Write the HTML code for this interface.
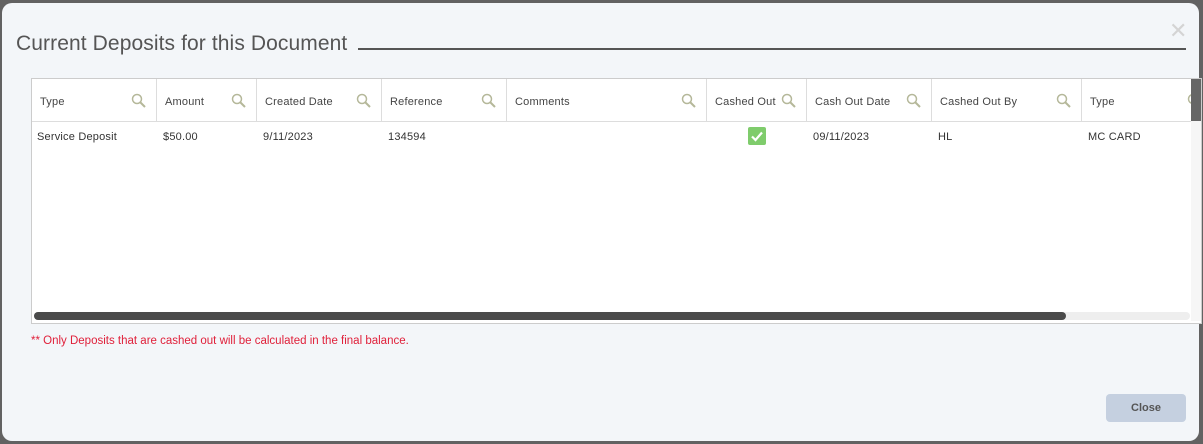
<!DOCTYPE html>
<html><head><style>
body{margin:0;width:1203px;height:444px;background:#626262;font-family:"Liberation Sans",sans-serif;overflow:hidden;position:relative}
.modal{position:absolute;left:2px;top:3px;width:1197px;height:438px;background:#f3f6f9;border-radius:10px}
.title{position:absolute;left:14px;top:29px;font-size:21px;color:#555;letter-spacing:0.1px}
.line{position:absolute;left:356px;top:45px;width:828px;height:2px;background:#555}
.x{position:absolute;left:1167px;top:15px;font-size:22px;color:#d4d4d4}
.grid{position:absolute;left:29px;top:75px;width:1169px;height:244px;background:#fff;border:1px solid #ccc;overflow:hidden}
.h{position:absolute;top:0;height:43px;border-right:1px solid #ddd;border-bottom:1px solid #ddd;font-size:11px;color:#444;line-height:46px;box-sizing:border-box;padding-left:8px;letter-spacing:0.2px}
.h svg{position:absolute;right:9px;top:14px}
.c{position:absolute;top:52px;font-size:11px;color:#333;letter-spacing:0.2px}
.vs{position:absolute;left:1159px;top:0;width:10px;height:242px;background:#f6f6f6}
.vs div{width:10px;height:42px;background:#666}
.hs{position:absolute;left:2px;top:233px;width:1156px;height:8px;background:#eee;border-radius:4px}
.hs div{width:1032px;height:8px;background:#4a4a4a;border-radius:4px}
.note{position:absolute;left:29px;top:332px;font-size:11.5px;color:#e0203a}
.btn{position:absolute;left:1104px;top:391px;width:80px;height:28px;background:#c5d0e0;border-radius:4px;text-align:center;line-height:29px;font-size:11px;font-weight:bold;color:#555}
.chk{position:absolute;left:716px;top:48px;width:18px;height:18px;background:#7fcc6c;border-radius:2px}
</style></head><body>
<div class="modal">
<div class="title">Current Deposits for this Document</div>
<div class="line"></div>
<div class="x">✕</div>
<div class="grid">
<div class="h" style="left:0;width:125px">Type<svg width="16" height="16"><circle cx="6" cy="6" r="4.5" fill="none" stroke="#b5b89a" stroke-width="1.5"/><path d="M9.5 9.5L14 14" stroke="#b5b89a" stroke-width="2"/></svg></div>
<div class="h" style="left:125px;width:100px">Amount<svg width="16" height="16"><circle cx="6" cy="6" r="4.5" fill="none" stroke="#b5b89a" stroke-width="1.5"/><path d="M9.5 9.5L14 14" stroke="#b5b89a" stroke-width="2"/></svg></div>
<div class="h" style="left:225px;width:125px">Created Date<svg width="16" height="16"><circle cx="6" cy="6" r="4.5" fill="none" stroke="#b5b89a" stroke-width="1.5"/><path d="M9.5 9.5L14 14" stroke="#b5b89a" stroke-width="2"/></svg></div>
<div class="h" style="left:350px;width:125px">Reference<svg width="16" height="16"><circle cx="6" cy="6" r="4.5" fill="none" stroke="#b5b89a" stroke-width="1.5"/><path d="M9.5 9.5L14 14" stroke="#b5b89a" stroke-width="2"/></svg></div>
<div class="h" style="left:475px;width:200px">Comments<svg width="16" height="16"><circle cx="6" cy="6" r="4.5" fill="none" stroke="#b5b89a" stroke-width="1.5"/><path d="M9.5 9.5L14 14" stroke="#b5b89a" stroke-width="2"/></svg></div>
<div class="h" style="left:675px;width:100px">Cashed Out<svg width="16" height="16"><circle cx="6" cy="6" r="4.5" fill="none" stroke="#b5b89a" stroke-width="1.5"/><path d="M9.5 9.5L14 14" stroke="#b5b89a" stroke-width="2"/></svg></div>
<div class="h" style="left:775px;width:125px">Cash Out Date<svg width="16" height="16"><circle cx="6" cy="6" r="4.5" fill="none" stroke="#b5b89a" stroke-width="1.5"/><path d="M9.5 9.5L14 14" stroke="#b5b89a" stroke-width="2"/></svg></div>
<div class="h" style="left:900px;width:150px">Cashed Out By<svg width="16" height="16"><circle cx="6" cy="6" r="4.5" fill="none" stroke="#b5b89a" stroke-width="1.5"/><path d="M9.5 9.5L14 14" stroke="#b5b89a" stroke-width="2"/></svg></div>
<div class="h" style="left:1050px;width:120px;border-right:0">Type<svg width="16" height="16" style="right:-1px"><circle cx="6" cy="6" r="4.5" fill="none" stroke="#b5b89a" stroke-width="1.5"/></svg></div>
<div class="c" style="left:5px">Service Deposit</div>
<div class="c" style="left:131px">$50.00</div>
<div class="c" style="left:231px">9/11/2023</div>
<div class="c" style="left:356px">134594</div>
<div class="chk"><svg width="18" height="18"><path d="M4 9.5L7.5 13L14 5.5" fill="none" stroke="#fff" stroke-width="2.2"/></svg></div>
<div class="c" style="left:781px">09/11/2023</div>
<div class="c" style="left:906px">HL</div>
<div class="c" style="left:1056px">MC CARD</div>
<div class="vs"><div></div></div>
<div class="hs"><div></div></div>
</div>
<div class="note">** Only Deposits that are cashed out will be calculated in the final balance.</div>
<div class="btn">Close</div>
</div>
</body></html>
